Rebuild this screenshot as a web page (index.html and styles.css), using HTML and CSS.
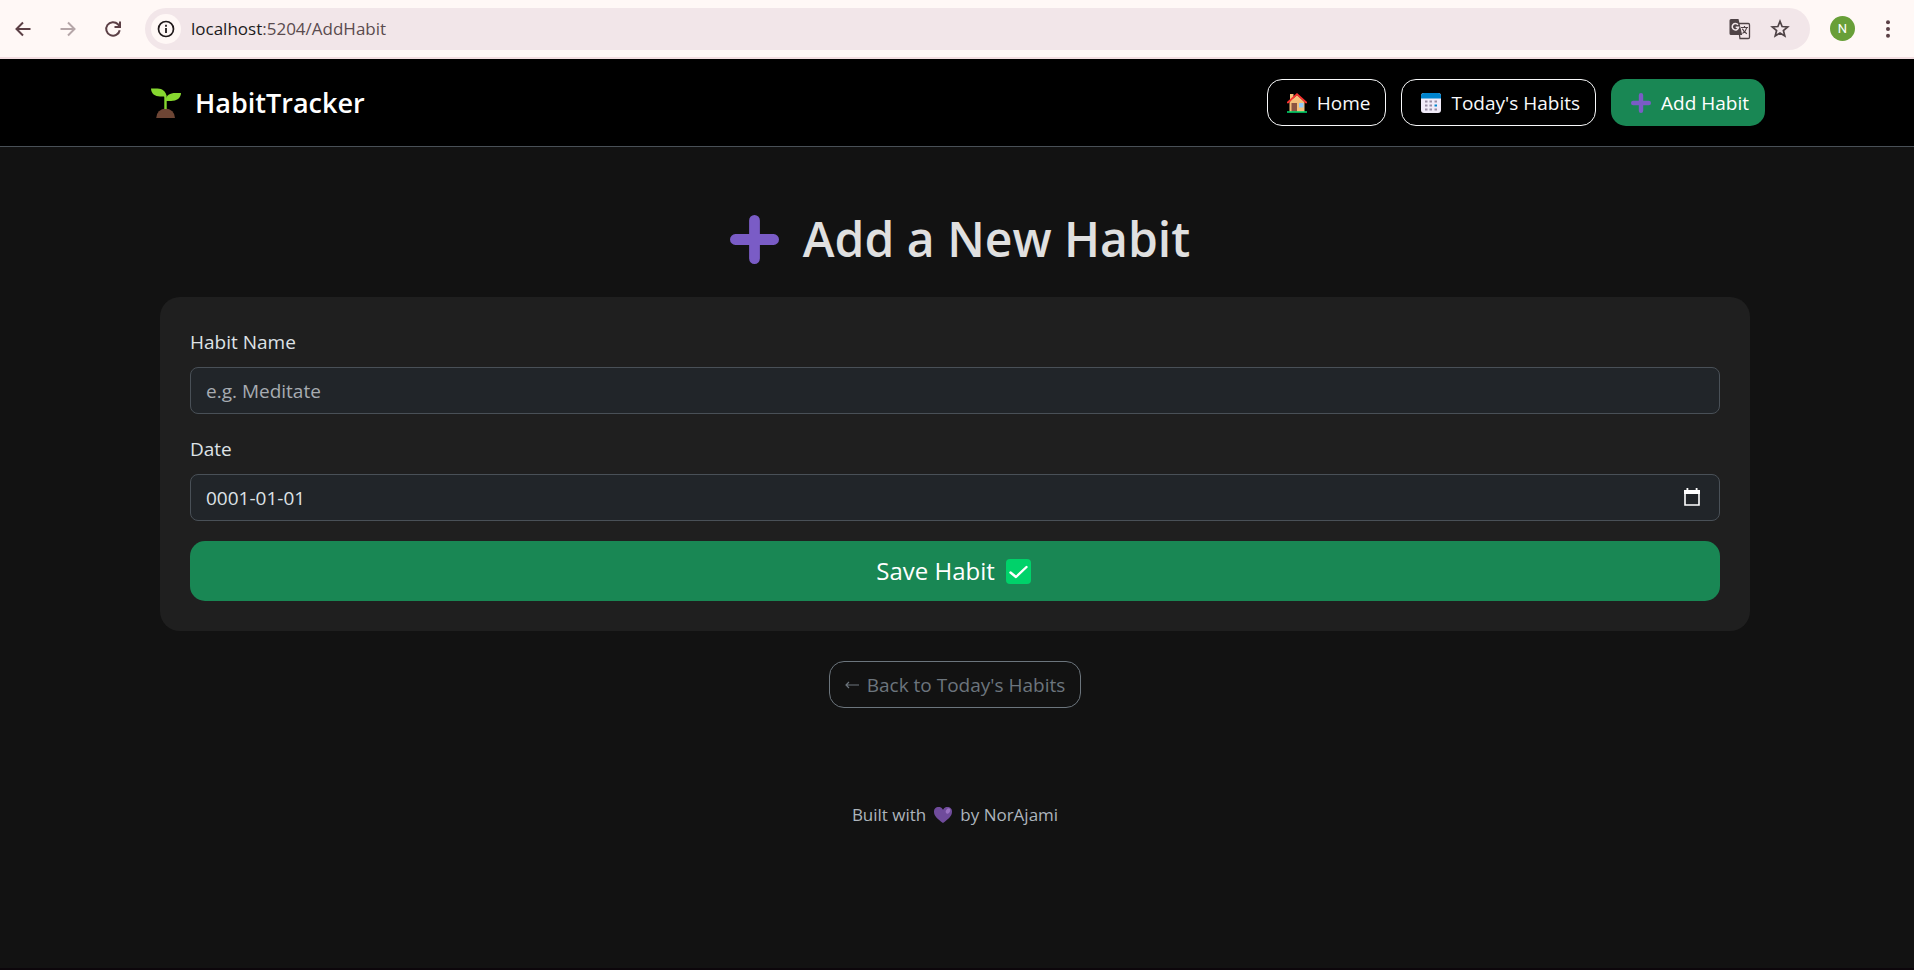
FILE: index.html
```html
<!DOCTYPE html>
<html lang="en">
<head>
<meta charset="utf-8">
<meta name="viewport" content="width=device-width, initial-scale=1">
<title>Add Habit - HabitTracker</title>
<link rel="stylesheet" href="styles.css">
</head>
<body>
<svg class="sprite" aria-hidden="true">
  <symbol id="plus" viewBox="0 0 20 20"><path d="M10 2.200v15.600M2.200 10h15.600" fill="none" stroke="#7a5cc6" stroke-width="4.400" stroke-linecap="round"/></symbol>
</svg>
<div class="toolbar">
  <div class="toolbar-nav">
    <button class="tool" type="button" aria-label="Back"><svg viewBox="0 0 20 20"><path d="M17.500 10H4M10 3.500 3.500 10l6.500 6.500" fill="none" stroke="currentColor" stroke-width="2"/></svg></button>
    <button class="tool tool-off" type="button" aria-label="Forward"><svg viewBox="0 0 20 20"><path d="M2.500 10H16M10 3.500 16.500 10 10 16.500" fill="none" stroke="currentColor" stroke-width="2"/></svg></button>
    <button class="tool" type="button" aria-label="Reload"><svg viewBox="0 0 20 20"><path d="M16.700 11.200A6.800 6.800 0 1 1 15 5.300l1.500 1.700M17 2.500V8h-5.500" fill="none" stroke="currentColor" stroke-width="2"/></svg></button>
  </div>
  <div class="address">
    <button class="info" type="button" aria-label="Site information"><svg viewBox="0 0 18 18"><circle cx="9" cy="9" r="7.500" fill="none" stroke="currentColor" stroke-width="1.700"/><path d="M9 8v5M9 4.800v1.900" stroke="currentColor" stroke-width="1.800"/></svg></button>
    <span class="url"><span class="host">localhost</span>:5204/AddHabit</span>
    <button class="tool" type="button" aria-label="Translate"><svg class="translate" viewBox="0 0 22 22"><path d="M10 5.500h9.300a1.200 1.200 0 0 1 1.200 1.200v12.600a1.200 1.200 0 0 1-1.200 1.200H11L10.500 17" fill="none" stroke="currentColor" stroke-width="1.300"/><path d="M2 1h7.500l3.700 16H2a1.500 1.500 0 0 1-1.500-1.500v-13A1.500 1.500 0 0 1 2 1z" fill="currentColor"/><path d="M9 6.800A3.200 3.200 0 1 0 9.600 9.200H6.700" fill="none" stroke="#f2e6e9" stroke-width="1.500"/><path d="M12 9.500h7M15.500 8v1.500M17.800 9.500c-.5 2.500-2 4.500-4.300 6M13.300 10.800c1 2 2.500 3.500 4.500 5" fill="none" stroke="currentColor" stroke-width="1.200"/></svg></button>
    <button class="tool" type="button" aria-label="Bookmark"><svg viewBox="0 0 20 20"><path d="m10 2.300 2.100 5.200 5.600.4-4.300 3.600 1.400 5.500L10 14l-4.800 3 1.400-5.500-4.300-3.600 5.600-.4z" fill="none" stroke="currentColor" stroke-width="1.700"/></svg></button>
  </div>
  <button class="avatar" type="button" aria-label="Profile">N</button>
  <button class="tool" type="button" aria-label="Menu"><svg viewBox="0 0 20 20" fill="currentColor"><circle cx="10" cy="3.200" r="2"/><circle cx="10" cy="10" r="2"/><circle cx="10" cy="16.800" r="2"/></svg></button>
</div>

<header class="navbar">
  <div class="container navbar-inner">
    <a class="brand" href="#"><svg viewBox="0 0 30 30"><path d="M5.200 30a9.400 9.400 0 0 1 18.800 0z" fill="#6d4534"/><path d="M14.500 21V9.500c0-3-2-5-5-5" fill="none" stroke="#86d72f" stroke-width="2.400"/><path d="M0 .5h6.500c5 0 8.500 3 9 8H9C4 8.500 0 5.500 0 .5z" fill="#86d72f"/><path d="M30 5h-5.500c-5.500 0-9.500 2-10 8H20c5.500 0 10-3 10-8z" fill="#86d72f"/></svg>HabitTracker</a>
    <nav class="menu">
      <a class="btn btn-light" href="#"><svg class="emoji" viewBox="0 0 20 20"><path d="M3 1h3.500v7H3z" fill="#f3c07b"/><path d="M2.500 9 10 2l7.500 7v10h-15z" fill="#f3c07b"/><path d="m.8 9.500 9.200-8.300 9.200 8.300" fill="none" stroke="#f8312f" stroke-width="1.800" stroke-linecap="round"/><path d="M4.500 10H10v9H4.500z" fill="#8c5543"/><path d="M12 10h4.500v4.500H12z" fill="#8fc9fb"/><path d="M0 18.200h20v1.600H0z" fill="#00d26a"/></svg>Home</a>
      <a class="btn btn-light" href="#"><svg class="emoji" viewBox="0 0 20 20"><rect width="20" height="20" rx="3" fill="#f1ebf8"/><path d="M0 5.500V3a3 3 0 0 1 3-3h14a3 3 0 0 1 3 3v2.500z" fill="#0084ce"/><path d="M4 8.500h2.500m2 0H11m2.500 0H16m-12 4h2.500m2 0H11m-7 4h2.500m2 0H11m2.500 0H16" stroke="#998ea4" stroke-width="2"/><path d="M13.500 12.500H16" stroke="#0084ce" stroke-width="2"/></svg>Today's Habits</a>
      <a class="btn btn-green" href="#"><svg class="emoji"><use href="#plus"/></svg>Add Habit</a>
    </nav>
  </div>
</header>

<div class="page">
  <main class="container main">
    <h1><svg><use href="#plus"/></svg>Add a New Habit</h1>
    <form class="card">
      <div class="field">
        <label for="name">Habit Name</label>
        <input id="name" type="text" placeholder="e.g. Meditate">
      </div>
      <div class="field">
        <label for="date">Date</label>
        <div class="date-box">
          <input id="date" type="text" value="0001-01-01">
          <button class="picker" type="button" aria-label="Choose date"><svg viewBox="0 0 16 18"><path d="M1 3h14v14H1z" fill="none" stroke="#fff" stroke-width="1.600"/><path d="M0 2h16v4H0zM2.500 0h1.800v3H2.500zM11.700 0h1.800v3h-1.800z" fill="#fff"/></svg></button>
        </div>
      </div>
      <button class="btn btn-green btn-save" type="submit">Save Habit<svg viewBox="0 0 25 25"><rect width="25" height="25" rx="4" fill="#00d26a"/><path d="m4.500 13.500 5.500 4.500L20.500 8" fill="none" stroke="#fff" stroke-width="2.400" stroke-linecap="round" stroke-linejoin="round"/></svg></button>
    </form>
    <a class="btn btn-muted" href="#"><svg class="arrow" viewBox="0 0 14 10"><path d="M14 5H1M4 2 1 5l3 3" fill="none" stroke="currentColor" stroke-width="1.200"/></svg>Back to Today's Habits</a>
  </main>

  <footer class="footer">Built with <svg viewBox="0 0 18 16"><path d="M9 16C4 12.500 0 9 0 5a4.700 4.700 0 0 1 9-2.200A4.700 4.700 0 0 1 18 5c0 4-4 7.500-9 11z" fill="#6f4b9b"/><ellipse cx="14" cy="4" rx="2" ry="2.800" transform="rotate(30 14 4)" fill="#9a72c2"/></svg> by NorAjami</footer>
</div>
</body>
</html>
```
FILE: styles.css
```css
* { box-sizing: border-box; }
body {
  margin: 0;
  min-height: 100vh;
  background: #121212;
  color: #dee2e6;
  font: 20px/30px "Open Sans", "Noto Sans", sans-serif;
  border-bottom: 2px solid #0c060b;
}
svg { display: block; flex: none; }
.sprite { display: none; }
button { padding: 0; border: 0; background: none; color: inherit; font: inherit; }
a { text-decoration: none; }

.toolbar {
  display: flex;
  align-items: center;
  height: 59px;
  padding: 0 16px 0 13px;
  background: #fff8f6;
  border-bottom: 2px solid #f2dde1;
  color: #5c4046;
}
.toolbar-nav { display: flex; gap: 25px; margin-right: 22px; }
.tool svg { width: 20px; height: 20px; }
.tool .translate { width: 22px; height: 22px; }
.tool-off { color: #b5a6a8; }
.address {
  flex: 1;
  display: flex;
  align-items: center;
  gap: 19px;
  height: 42px;
  padding: 0 20px 0 6px;
  border-radius: 21px;
  background: #f2e6e9;
  color: #4f4346;
}
.info {
  display: grid;
  place-items: center;
  width: 30px;
  height: 30px;
  margin-right: -9px;
  border-radius: 50%;
  background: #fff8f6;
  color: #201a1b;
}
.info svg { width: 18px; height: 18px; }
.url { flex: 1; padding-top: 1px; font-size: 17px; color: #5a4b4e; }
.host { color: #201a1b; }
.avatar {
  width: 25px;
  height: 25px;
  margin: 0 23px 0 20px;
  border-radius: 50%;
  background: #689f38;
  color: #fff;
  font: 13px/25px Roboto, sans-serif;
}

.container { width: 100%; max-width: 1650px; margin: 0 auto; }
.page { padding-right: 4px; }
.navbar { padding: 20px 4px 20px 0; background: #000; border-bottom: 1px solid #495057; }
.navbar-inner {
  display: flex;
  align-items: center;
  justify-content: space-between;
  padding: 0 15px 0 21px;
}
.brand { display: flex; align-items: center; gap: 14px; color: #fff; font-size: 27px; font-weight: 600; }
.brand svg { width: 30px; height: 30px; }
.menu { display: flex; gap: 15px; }
.btn {
  display: inline-flex;
  align-items: center;
  justify-content: center;
  height: 47px;
  padding: 0 15px;
  border: 1px solid transparent;
  border-radius: 15px;
  font-size: 19px;
}
.btn-light { border-color: #f8f9fa; color: #f8f9fa; }
.btn-green { background: #198754; color: #fff; }
.emoji { width: 20px; height: 20px; margin: 0 10px 0 4px; }

.main { padding: 62px 30px 0; text-align: center; }
h1 {
  display: flex;
  align-items: center;
  justify-content: center;
  gap: 24px;
  margin: 0 0 28px;
  padding-left: 10px;
  color: #e0e0e0;
  font-size: 48px;
  line-height: 60px;
  font-weight: 600;
}
h1 svg { width: 49px; height: 49px; }
.card { margin-bottom: 30px; padding: 30px; border-radius: 20px; background: #1f1f1f; text-align: left; }
.field { margin-bottom: 20px; }
.field label { display: block; margin-bottom: 10px; font-size: 19px; }
.field input {
  width: 100%;
  height: 47px;
  padding: 1px 15px 0;
  border: 1px solid #495057;
  border-radius: 8px;
  background: #212529;
  color: #dee2e6;
  font: inherit;
  font-size: 19px;
}
.field input::placeholder { color: #a7acb1; opacity: 1; }
.date-box { position: relative; }
.picker { position: absolute; top: 14px; right: 20px; }
.picker svg { width: 16px; height: 18px; }
.btn-save { display: flex; width: 100%; height: 60px; gap: 11px; padding-right: 18px; font-size: 24px; }
.btn-save svg { width: 25px; height: 25px; }
.btn-muted { gap: 8px; border-color: #6c757d; color: #6c757d; }
.arrow { width: 14px; height: 10px; }

.footer {
  display: flex;
  align-items: center;
  justify-content: center;
  gap: 8px;
  padding: 92px 0 40px;
  color: #adb5bd;
  font-size: 17px;
}
.footer svg { width: 18px; height: 16px; }
```
